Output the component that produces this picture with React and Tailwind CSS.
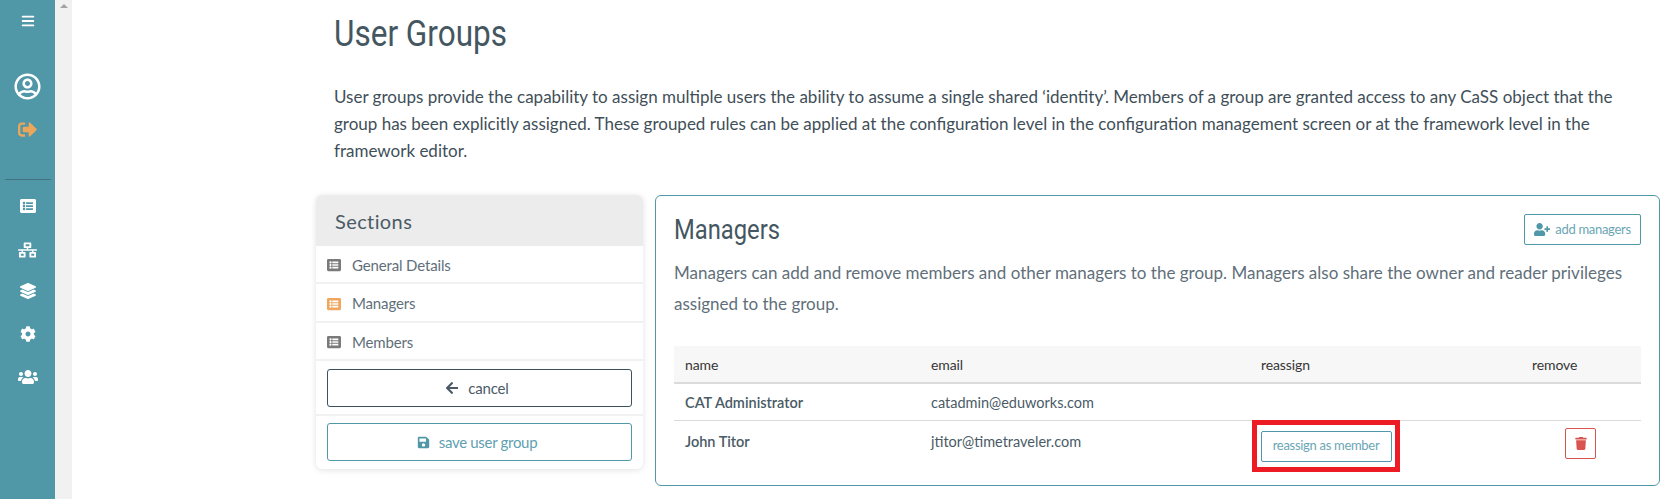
import React from "react";
import {
  FaBars,
  FaRegUserCircle,
  FaSignOutAlt,
  FaListAlt,
  FaNetworkWired,
  FaLayerGroup,
  FaCog,
  FaUsers,
  FaArrowLeft,
  FaSave,
  FaUserPlus,
  FaTrash,
} from "react-icons/fa";

const body = "font-['Lato','Liberation_Sans',sans-serif]";
const heading = "font-['Roboto','Liberation_Sans',sans-serif]";

function Sidebar() {
  return (
    <div className="w-[55px] shrink-0 bg-[#5097a8] flex flex-col items-center text-white">
      <FaBars className="mt-[14px] w-[14px] h-[14px]" />
      <FaRegUserCircle className="mt-[45px] w-[27px] h-[27px]" />
      <FaSignOutAlt className="mt-[20px] w-[19px] h-[19px] text-[#eca65c]" />
      <div className="mt-[40px] h-px w-[46px] bg-[#44727f]" />
      <FaListAlt className="mt-[18px] w-[16px] h-[16px]" />
      <FaNetworkWired className="mt-[28px] w-[19px] h-[16px]" />
      <FaLayerGroup className="mt-[25px] w-[16px] h-[16px]" />
      <FaCog className="mt-[27px] w-[16px] h-[16px]" />
      <FaUsers className="mt-[27px] w-[20px] h-[16px]" />
    </div>
  );
}

function Scrollbar() {
  return (
    <div className="w-[17px] shrink-0 bg-[#f1f1f1] flex justify-center pt-[4px]">
      <div className="w-0 h-0 border-x-[4px] border-x-transparent border-b-[4px] border-b-[#a3a3a3]" />
    </div>
  );
}

function SectionRow({ label, active, tall }) {
  return (
    <div className={`${tall ? "h-[39px]" : "h-[38px]"} flex items-center border-b-2 border-[#f1f1f1] pl-[11px] pt-[2px]`}>
      <FaListAlt className={`w-[14px] h-[14px] ${active ? "text-[#f0a65f]" : "text-[#7a7a7a]"}`} />
      <span className="ml-[11px] text-[15px] tracking-[-0.15px] text-[#5f6f7a]">{label}</span>
    </div>
  );
}

function SectionsCard() {
  return (
    <div className="w-[327px] h-[274px] shrink-0 rounded-md bg-white shadow-[0_1px_6px_rgba(0,0,0,0.12)] overflow-hidden">
      <div className="h-[51px] bg-[#ececec] flex items-center pl-[19px] text-[20px] tracking-[0.4px] text-[#4a5b66]">Sections</div>
      <SectionRow label="General Details" />
      <SectionRow label="Managers" active tall />
      <SectionRow label="Members" />
      <div className="px-[11px] pt-[8px] pb-[7px] border-b-2 border-[#f1f1f1]">
        <button className="w-full h-[38px] pr-[5px] rounded-[3px] border border-[#3f515c] flex items-center justify-center gap-[9px] text-[15px] tracking-[-0.2px] text-[#4a5b66]">
          <FaArrowLeft className="w-[14px] h-[14px]" />
          cancel
        </button>
      </div>
      <div className="px-[11px] pt-[7px]">
        <button className="w-full h-[38px] pr-[5px] rounded-[3px] border border-[#5097a8] flex items-center justify-center gap-[9px] text-[15px] tracking-[-0.3px] text-[#5f9fb0]">
          <FaSave className="w-[13px] h-[13px] text-[#5097a8]" />
          save user group
        </button>
      </div>
    </div>
  );
}

function ManagersCard() {
  return (
    <div className="w-[1005px] h-[291px] shrink-0 rounded-md border border-[#5097a8] px-[18px] pt-[18px]">
      <div className="flex items-start justify-between h-[33px]">
        <h2 className={`${heading} text-[27px] leading-[32px] origin-left scale-x-[0.88] text-[#44565f]`}>Managers</h2>
        <button className="w-[117px] h-[31px] rounded-[2px] border border-[#5097a8] flex items-center justify-center gap-[5px] text-[13px] tracking-[-0.3px] text-[#6aa6b5]">
          <FaUserPlus className="w-[16px] h-[13px] text-[#5097a8]" />
          add managers
        </button>
      </div>
      <p className="mt-[10px] text-[17px] leading-[31px] text-[#5f6f7a]">
        Managers can add and remove members and other managers to the group. Managers also share the owner and reader privileges assigned to the group.
      </p>
      <div className="mt-[27px] grid grid-cols-[246px_330px_271px_1fr] h-[38px] items-center pl-[11px] bg-[#f7f7f7] border-b-2 border-[#dbdbdb] text-[14px] tracking-[-0.1px] text-[#363636]">
        <span>name</span>
        <span>email</span>
        <span>reassign</span>
        <span>remove</span>
      </div>
      <div className="grid grid-cols-[246px_330px_271px_1fr] h-[37px] items-center pl-[11px] pt-[2px] border-b border-[#dbdbdb] text-[14.5px] text-[#4a5b66]">
        <span className="font-semibold">CAT Administrator</span>
        <span>catadmin@eduworks.com</span>
      </div>
      <div className="grid grid-cols-[246px_321px_280px_1fr] h-[52px] items-start pl-[11px] text-[14.5px] text-[#4a5b66]">
        <span className="font-semibold mt-[10px]">John Titor</span>
        <span className="mt-[10px]">jtitor@timetraveler.com</span>
        <div className="mt-[-1px] w-[148px] h-[52px] border-[5px] border-[#ed1c24] flex items-center justify-center">
          <button className="w-[131px] h-[31px] rounded-[2px] border border-[#5097a8] text-[13px] tracking-[-0.3px] text-[#6aa6b5]">reassign as member</button>
        </div>
        <button className="mt-[7px] ml-[33px] w-[31px] h-[31px] rounded-[2px] border border-[#d9534f] flex items-center justify-center text-[#d9534f]">
          <FaTrash className="w-[12px] h-[13px]" />
        </button>
      </div>
    </div>
  );
}

export default function App() {
  return (
    <div className={`${body} w-[1666px] h-[499px] overflow-hidden flex bg-white`}>
      <Sidebar />
      <Scrollbar />
      <div className="flex-1 min-w-0 pl-[244px]">
        <div className="pl-[18px] pr-[20px]">
          <h1 className={`${heading} text-[36px] leading-[44px] origin-left scale-x-[0.875] text-[#44565f] mt-[12px]`}>User Groups</h1>
          <p className="mt-[27px] w-[1290px] text-[17px] leading-[27px] text-[#3f4f59]">
            User groups provide the capability to assign multiple users the ability to assume a single shared ‘identity’. Members of a group are granted access to any CaSS object that the group has been explicitly assigned. These grouped rules can be applied at the configuration level in the configuration management screen or at the framework level in the framework editor.
          </p>
        </div>
        <div className="mt-[31px] flex gap-[12px]">
          <SectionsCard />
          <ManagersCard />
        </div>
      </div>
    </div>
  );
}
